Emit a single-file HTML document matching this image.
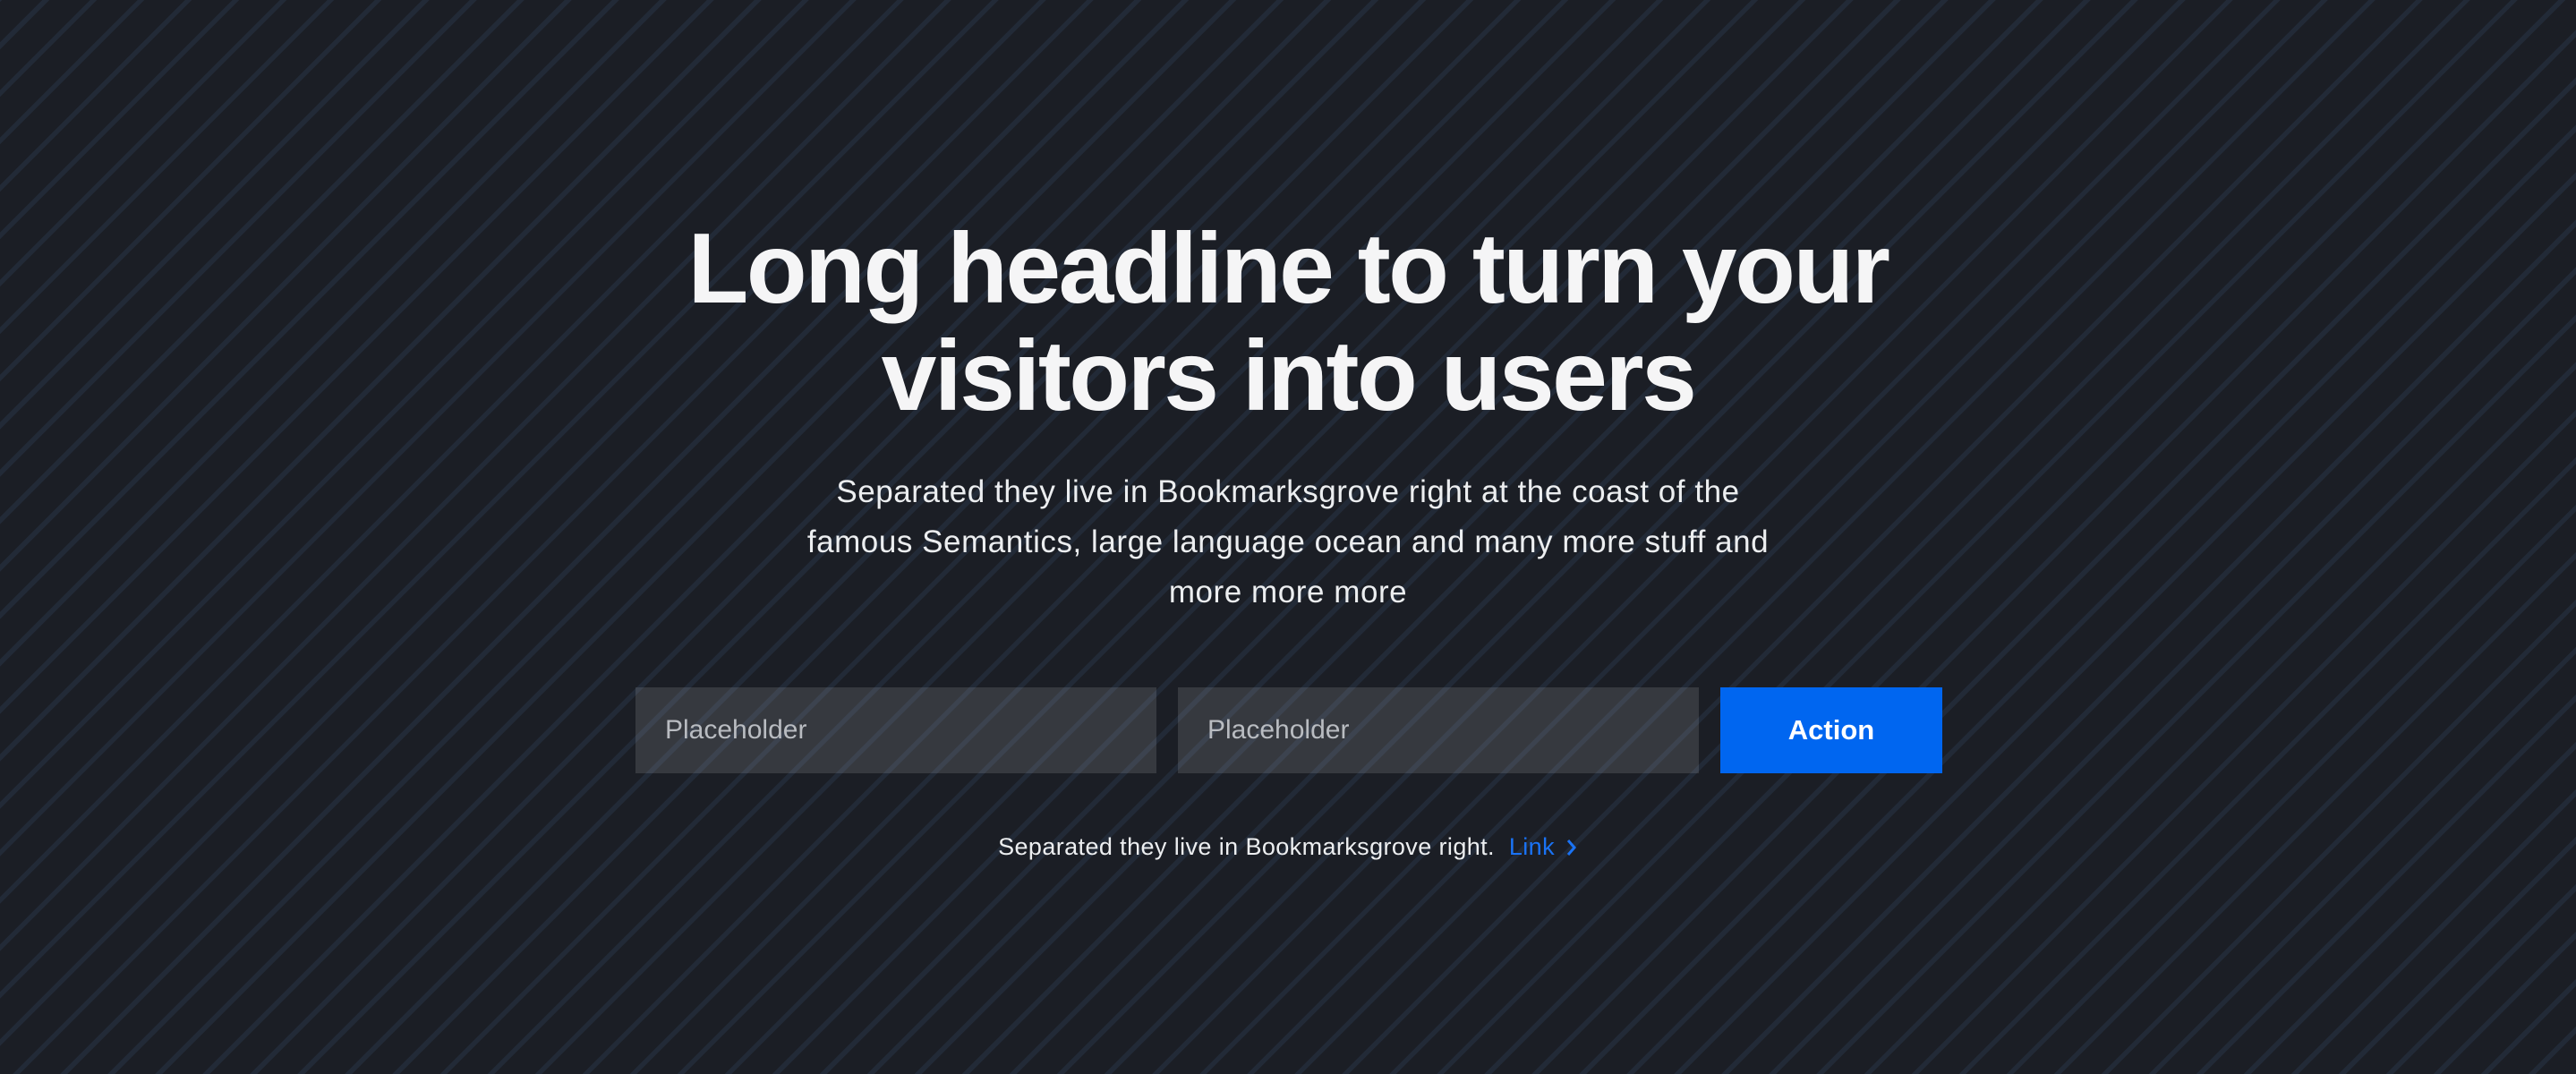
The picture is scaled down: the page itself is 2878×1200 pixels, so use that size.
<!DOCTYPE html>
<html><head><meta charset="utf-8"><style>
html,body{margin:0;padding:0}
body{width:2878px;height:1200px;overflow:hidden;position:relative;font-family:"Liberation Sans",Arial,sans-serif;
background-color:#1b1e25;
background-image:repeating-linear-gradient(-45deg,#1b1e25 0px,#1b1e25 32px,#222a37 32px,#222a37 37.5px);}
.h{position:absolute;left:0;width:2878px;top:240px;text-align:center;color:#f5f5f6;font-weight:bold;font-size:111px;line-height:120px;letter-spacing:-2.5px;margin:0}
.s{position:absolute;left:0;width:2878px;top:522px;text-align:center;color:#eceef0;font-size:35px;line-height:56px;letter-spacing:0.55px;margin:0}
.in{position:absolute;top:768px;height:96px;width:582px;background:rgba(255,255,255,0.12);color:#b9bcc1;font-size:30px;line-height:96px;box-sizing:border-box;padding-left:33px}
.btn{position:absolute;left:1922px;top:768px;width:248px;height:96px;background:#0066f0;color:#fff;font-weight:bold;font-size:31px;line-height:96px;text-align:center}
.b{position:absolute;left:0;width:2878px;top:926px;text-align:center;color:#eceef0;font-size:27px;line-height:40px;letter-spacing:0.4px}
.b a{color:#1a73f5;text-decoration:none;margin-left:8px}
</style></head><body>
<h1 class="h">Long headline to turn your<br>visitors into users</h1>
<p class="s">Separated they live in Bookmarksgrove right at the coast of the<br>famous Semantics, large language ocean and many more stuff and<br>more more more</p>
<div class="in" style="left:710px">Placeholder</div>
<div class="in" style="left:1316px">Placeholder</div>
<div class="btn">Action</div>
<div class="b">Separated they live in Bookmarksgrove right. <a>Link <svg width="14" height="22" viewBox="0 0 14 22" style="vertical-align:-3px;margin-left:4px"><path d="M3 3 L10 11 L3 19" fill="none" stroke="#1a73f5" stroke-width="3"/></svg></a></div>
</body></html>
